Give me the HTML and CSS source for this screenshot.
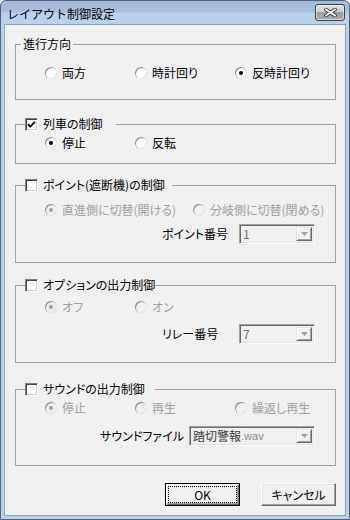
FILE: index.html
```html
<!DOCTYPE html>
<html lang="ja">
<head>
<meta charset="utf-8">
<title>レイアウト制御設定</title>
<link rel="stylesheet" href="styles.css">
</head>
<body>
<div class="window">
  <div class="titlebar">
    <span class="title">レイアウト制御設定</span>
    <span class="close" aria-label="閉じる">
      <svg width="13" height="9" viewBox="0 0 13 9"><path d="M2 1.5L11 7.5M11 1.5L2 7.5" stroke="#3a3a3a" stroke-width="3.6" stroke-linecap="square"/><path d="M2 1.5L11 7.5M11 1.5L2 7.5" stroke="#fff" stroke-width="1.8" stroke-linecap="square"/></svg>
    </span>
  </div>
  <div class="client">
    <fieldset class="group g1">
      <legend class="plain">進行方向</legend>
      <div class="options">
        <span class="opt w90"><span class="radio"></span>両方</span>
        <span class="opt w100"><span class="radio"></span>時計回り</span>
        <span class="opt"><span class="radio on"></span>反時計回り</span>
      </div>
    </fieldset>

    <fieldset class="group g2">
      <legend class="check-legend lg-train"><span class="check"><svg width="11" height="11" viewBox="0 0 11 11"><path d="M2 5.2L4.3 7.5L9 2.8" fill="none" stroke="#000" stroke-width="1.7"/></svg></span>列車の制御</legend>
      <div class="options">
        <span class="opt w90"><span class="radio on"></span>停止</span>
        <span class="opt"><span class="radio"></span>反転</span>
      </div>
    </fieldset>

    <fieldset class="group g3">
      <legend class="check-legend lg-point"><span class="check"></span>ポイント(遮断機)の制御</legend>
      <div class="options disabled">
        <span class="opt w148"><span class="radio on"></span>直進側に切替(開ける)</span>
        <span class="opt"><span class="radio"></span>分岐側に切替(閉める)</span>
      </div>
      <div class="field f-narrow">
        <span class="field-label">ポイント番号</span>
        <span class="combo w76"><span class="combo-value">1</span><span class="combo-btn"><svg width="7" height="4" viewBox="0 0 7 4"><path d="M0 0H7L3.5 4Z" fill="#a0a0a0"/></svg></span></span>
      </div>
    </fieldset>

    <fieldset class="group g4">
      <legend class="check-legend lg-opt"><span class="check"></span>オプションの出力制御</legend>
      <div class="options disabled">
        <span class="opt w90"><span class="radio on"></span>オフ</span>
        <span class="opt"><span class="radio"></span>オン</span>
      </div>
      <div class="field f-narrow">
        <span class="field-label">リレー番号</span>
        <span class="combo w76"><span class="combo-value">7</span><span class="combo-btn"><svg width="7" height="4" viewBox="0 0 7 4"><path d="M0 0H7L3.5 4Z" fill="#a0a0a0"/></svg></span></span>
      </div>
    </fieldset>

    <fieldset class="group g5">
      <legend class="check-legend lg-sound"><span class="check"></span>サウンドの出力制御</legend>
      <div class="options disabled">
        <span class="opt w90"><span class="radio on"></span>停止</span>
        <span class="opt w100"><span class="radio"></span>再生</span>
        <span class="opt"><span class="radio"></span>繰返し再生</span>
      </div>
      <div class="field f-wide">
        <span class="field-label">サウンドファイル</span>
        <span class="combo w126"><span class="combo-value"><span class="cjk">踏切警報</span><span class="ext">.wav</span></span><span class="combo-btn"><svg width="7" height="4" viewBox="0 0 7 4"><path d="M0 0H7L3.5 4Z" fill="#a0a0a0"/></svg></span></span>
      </div>
    </fieldset>

    <div class="actions">
      <button class="btn default"><span class="btn-inner focus">OK</span></button>
      <button class="btn"><span class="btn-inner">キャンセル</span></button>
    </div>
  </div>
</div>
</body>
</html>
```
FILE: styles.css
```css
* { box-sizing: border-box; }
html, body { margin: 0; padding: 0; }
body {
  width: 350px;
  height: 520px;
  background: #ffffff;
  font-family: "Noto Sans CJK JP", "Noto Sans", sans-serif;
  font-size: 12px;
  line-height: 14px;
  color: #000;
}
.window {
  width: 350px;
  height: 520px;
  border: 1px solid #4f6278;
  border-radius: 6px 6px 0 0;
  background: linear-gradient(to bottom, #a3bbd7 0, #a9c0db 11px, #b9d1ea 12px, #b9d1ea 100%);
  display: flex;
  flex-direction: column;
  padding: 0 3px 3px;
}
.titlebar {
  height: 23px;
  display: flex;
  align-items: center;
  justify-content: space-between;
  padding: 0 1px 0 3px;
}
.title {
  padding-top: 2px;
  font-size: 12px;
  color: #000;
}
.close {
  width: 30px;
  height: 17px;
  border: 1px solid #3c3f44;
  border-radius: 3px;
  background: linear-gradient(to bottom, #dfe1e4 0, #cbcdd0 45%, #9a9da1 50%, #a9acb0 100%);
  box-shadow: inset 0 0 0 1px rgba(255,255,255,0.55);
  display: flex;
  align-items: center;
  justify-content: center;
}
.client {
  flex: 1;
  background: #f0f0f0;
  border: 1px solid #8ea4bd;
  padding: 12px 9px 0 10px;
  display: flex;
  flex-direction: column;
  font-feature-settings: "palt";
}
.group {
  margin: 0;
  padding: 0;
  border: 1px solid #a0a0a0;
  min-width: 0;
}
.plain {
  margin-left: 5px;
  padding: 0 2px;
  line-height: 14px;
}
.check-legend {
  margin-left: 9px;
  padding: 0;
  height: 14px;
  display: flex;
  align-items: center;
  gap: 5px;
  white-space: nowrap;
}
.lg-train { min-width: 91px; }
.lg-point { min-width: 147px; }
.lg-opt, .lg-sound { min-width: 130px; }

.g1 { padding: 15px 0 19px; }
.g2 { margin-top: 17px; padding: 5px 0 13px; }
.g3 { margin-top: 14px; padding: 11px 0 18px; }
.g4 { margin-top: 15px; padding: 8px 0 18px; }
.g5 { margin-top: 19px; padding: 5px 0 19px; }
.g3 .field { margin-top: 7px; }
.g4 .field { margin-top: 10px; }
.g5 .field { margin-top: 11px; }

.options {
  display: flex;
  align-items: center;
  height: 14px;
  padding-left: 29px;
}
.opt {
  display: flex;
  align-items: center;
  gap: 5px;
  white-space: nowrap;
}
.w90 { width: 90px; }
.w100 { width: 100px; }
.w148 { width: 148px; }
.disabled .opt { color: #a0a0a0; }

.radio {
  position: relative;
  flex: none;
  width: 12px;
  height: 12px;
  border-radius: 50%;
  background: #fff;
  box-shadow: inset 1px 1px 0 #8f8f8f, inset -1px -1px 0 #e4e4e4;
}
.radio.on::after {
  content: "";
  position: absolute;
  left: 4px;
  top: 4px;
  width: 4px;
  height: 4px;
  border-radius: 50%;
  background: #000;
}
.disabled .radio { background: #f0f0f0; }
.disabled .radio.on::after { background: #a0a0a0; }

.check {
  flex: none;
  width: 13px;
  height: 13px;
  background: #fff;
  border: 1px solid;
  border-color: #808080 #ffffff #ffffff #808080;
  box-shadow: inset 1px 1px 0 #404040, inset -1px -1px 0 #d4d0c8;
  display: flex;
  align-items: center;
  justify-content: center;
}

.field {
  display: flex;
  align-items: center;
  padding-right: 20px;
}
.f-narrow { padding-left: 146px; }
.f-wide { justify-content: flex-end; gap: 5px; }
.field-label { white-space: nowrap; }
.f-narrow .field-label { flex: 1; }

.combo {
  flex: none;
  height: 20px;
  display: flex;
  align-items: stretch;
  padding: 2px;
  background: #f0f0f0;
  border: 1px solid;
  border-color: #a0a0a0 #ffffff #ffffff #a0a0a0;
  box-shadow: inset 1px 1px 0 #696969, inset -1px -1px 0 #e3e3e3;
}
.w76 { width: 76px; }
.w126 { width: 126px; }
.combo-value {
  flex: 1;
  min-width: 0;
  padding-left: 1px;
  color: #6d6d6d;
  display: flex;
  align-items: center;
  white-space: nowrap;
}
.cjk { color: #3a3a3a; }
.ext {
  color: #8a8a8a;
  font-family: "Liberation Sans", sans-serif;
  font-size: 11px;
}
.combo-btn {
  width: 16px;
  flex: none;
  border: 1px solid;
  border-color: #e3e3e3 #696969 #696969 #e3e3e3;
  box-shadow: inset 1px 1px 0 #ffffff, inset -1px -1px 0 #a0a0a0;
  background: #f0f0f0;
  display: flex;
  align-items: center;
  justify-content: center;
}

.actions {
  display: flex;
  justify-content: flex-end;
  gap: 21px;
  margin-top: 17px;
}
.btn {
  width: 75px;
  height: 23px;
  padding: 2px;
  margin: 0;
  font: inherit;
  font-feature-settings: "palt";
  color: #000;
  background: #f0f0f0;
  border: 1px solid;
  border-color: #ffffff #696969 #696969 #ffffff;
  box-shadow: inset -1px -1px 0 #a0a0a0, inset 1px 1px 0 #e3e3e3;
  display: flex;
}
.btn.default {
  border-color: #000;
  box-shadow: inset 1px 1px 0 #ffffff, inset -1px -1px 0 #696969, inset -2px -2px 0 #a0a0a0;
}
.btn-inner {
  flex: 1;
  display: flex;
  align-items: center;
  justify-content: center;
  border: 1px solid transparent;
}
.btn-inner.focus { border: 1px dotted #000; }
```
